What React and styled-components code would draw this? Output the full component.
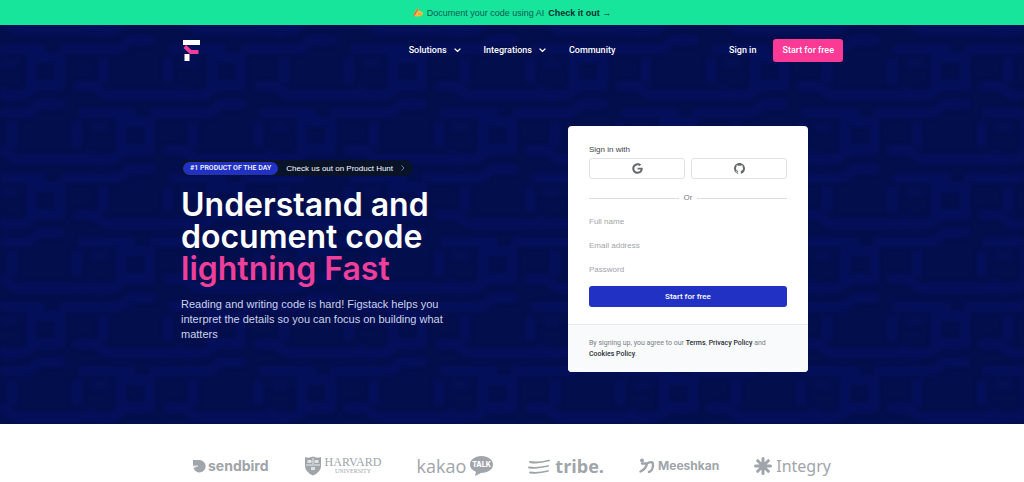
import React from "react";
import styled, { createGlobalStyle } from "styled-components";
import { FaGoogle } from "react-icons/fa";

// colors
const colors = {
  green: "#17e59c",
  navy: "#030e4c",
  line: "#05105e",
  pink: "#fb3a95",
  titlePink: "#ee3f9b",
  blue: "#2131c4",
  grey: "#a0a5ab",
};

const sans = `"Liberation Sans", Arial, sans-serif`;
const medium = `Roboto, "Liberation Sans", sans-serif`;
const display = `Inter, "Liberation Sans", sans-serif`;

const GlobalStyle = createGlobalStyle`
  * {
    box-sizing: border-box;
  }
  body {
    margin: 0;
    background: #fff;
    font-family: ${sans};
    overflow-x: hidden;
  }
  a {
    color: inherit;
    text-decoration: none;
  }
  button, input {
    font-family: inherit;
  }
`;

const Banner = styled.div`
  display: flex;
  align-items: center;
  justify-content: center;
  gap: 4px;
  height: 25px;
  background: ${colors.green};
  color: #0b5b52;
  font-size: 9px;

  a {
    color: #06302f;
    font-weight: 700;
  }
  svg {
    flex: none;
  }
`;

const Hero = styled.div`
  position: relative;
  background: ${colors.navy};
  color: #fff;
`;

// decorative pattern lies behind the hero content
const Backdrop = styled.svg`
  position: absolute;
  inset: 0;
  width: 100%;
  height: 100%;
`;

const Container = styled.div`
  position: relative;
  width: 100%;
  max-width: ${(props) => props.$width || 662}px;
  margin: 0 auto;
`;

const Header = styled.header`
  display: grid;
  grid-template-columns: 1fr auto 1fr;
  align-items: center;
  height: 50px;
  font-family: ${medium};
  font-size: 9px;
  font-weight: 500;
`;

const Logo = styled.a`
  display: flex;
  padding-left: 2px;
`;

const Nav = styled.nav`
  display: flex;
  align-items: center;
  gap: 23px;
`;

const NavLink = styled.a`
  display: flex;
  align-items: center;
  gap: 7px;
`;

const Actions = styled.div`
  display: flex;
  align-items: center;
  justify-content: flex-end;
  gap: 17px;
`;

const Button = styled.button`
  height: ${(props) => (props.$block ? 21 : 23)}px;
  width: ${(props) => (props.$block ? "100%" : "auto")};
  padding: 0 9px;
  border: 0;
  border-radius: 3px;
  background: ${(props) => (props.$block ? colors.blue : colors.pink)};
  color: #fff;
  font-family: ${medium};
  font-size: ${(props) => (props.$block ? 8 : 9)}px;
  font-weight: 500;
  white-space: nowrap;
`;

const Main = styled.main`
  display: grid;
  grid-template-columns: 1fr 310px;
  align-items: center;
  padding: 51px 0 52px;
`;

const Pill = styled.a`
  display: inline-flex;
  align-items: center;
  gap: 8px;
  height: 16px;
  padding: 0 8px 0 2px;
  border-radius: 8px;
  background: #081229;
  font-size: 8px;
`;

const Badge = styled.span`
  padding: 0 7px;
  border-radius: 7px;
  background: ${colors.blue};
  font-family: ${medium};
  font-size: 7px;
  font-weight: 500;
  line-height: 13px;
`;

const Title = styled.h1`
  margin: 13px 0 12px;
  font-family: ${display};
  font-size: 32px;
  font-weight: 600;
  line-height: 32px;

  span {
    display: block;
    color: ${colors.titlePink};
  }
`;

const Lead = styled.p`
  max-width: 290px;
  margin: 0;
  color: #cdd3ea;
  font-size: 11px;
  line-height: 15px;
`;

const Card = styled.section`
  width: 240px;
  justify-self: center;
  border-radius: 4px;
  background: #fff;
  color: #3f444b;
  font-size: 8px;
  overflow: hidden;
`;

const Form = styled.form`
  padding: 18px 21px 17px;
`;

const FormTitle = styled.div`
  margin-bottom: 2px;
  line-height: 12px;
`;

const Social = styled.div`
  display: grid;
  grid-template-columns: 1fr 1fr;
  gap: 6px;
`;

const SocialButton = styled.button`
  display: flex;
  align-items: center;
  justify-content: center;
  height: 21px;
  padding: 0;
  border: 1px solid #dfe2e5;
  border-radius: 3px;
  background: #fff;
  color: #666b70;
`;

const Divider = styled.div`
  display: flex;
  align-items: center;
  gap: 5px;
  margin: 13px 0 5px;
  color: #7b8086;
  line-height: 12px;

  &::before,
  &::after {
    content: "";
    flex: 1;
    height: 1px;
    background: #dcdfe2;
  }
`;

const Fields = styled.div`
  margin-bottom: 5px;
`;

const Field = styled.input`
  display: block;
  width: 100%;
  height: 24px;
  padding: 0;
  border: 0;
  background: transparent;
  color: #3f444b;
  font-size: 8px;

  &::placeholder {
    color: #a0a4a8;
    opacity: 1;
  }
`;

const Terms = styled.div`
  padding: 13px 21px 12px;
  border-top: 1px solid #e7eaed;
  background: #f8fafb;
  color: #7b8086;
  font-family: ${medium};
  font-size: 7px;
  line-height: 11px;

  a {
    color: #2a2e35;
    font-weight: 500;
  }
`;

const Brands = styled(Container)`
  display: flex;
  align-items: center;
  justify-content: space-between;
  height: 58px;
  margin-top: 13px;
`;

const Brand = styled.div`
  display: flex;
  align-items: center;
  gap: ${(props) => props.$gap || 3}px;
  color: ${colors.grey};
  font-family: ${(props) => props.$font || display};
  font-size: ${(props) => props.$size}px;
  font-weight: ${(props) => props.$weight || 400};
  line-height: 20px;
`;

const Stack = styled.div`
  display: flex;
  flex-direction: column;
  align-items: center;
  line-height: 11px;

  small {
    font-size: 6px;
    line-height: 7px;
  }
`;

const Chevron = () => (
  <svg width="7" height="5" viewBox="0 0 7 5" fill="none" stroke="currentColor">
    <path d="M1 1l2.5 2.5L6 1" strokeWidth="1.2" strokeLinecap="round" />
  </svg>
);

const WritingHand = () => (
  <svg width="10" height="9" viewBox="0 0 10 9">
    <path
      d="M1 5.800Q2.500 2 4.500 .6q1.400-.3 1.200 1L5 3.200l2.400-.5q1 .2.700 1l1.300.4q.8.700.2 1.500.5.900-.3 1.500Q7.500 8.800 4.500 8.600L1 8.300z"
      fill="#f7bd45"
    />
    <path d="M.3 8.800L1 6l3.200-5.200 1.100.7L2.200 7z" fill="#e4663f" />
    <path d="M5 5.200h3.600M5 6.600h3.400" stroke="#d98d24" strokeWidth=".5" />
  </svg>
);

const Pattern = () => (
  <Backdrop aria-hidden="true">
    <defs>
      <filter
        id="soft"
        x="0"
        y="0"
        width="100%"
        height="100%"
        colorInterpolationFilters="sRGB"
      >
        <feGaussianBlur stdDeviation="2" />
      </filter>
      <g id="links" fill="none" stroke={colors.line} strokeWidth="9">
        <path d="M-12 24H45M60 24H120L130 15H155M-12 70H24L36 61H60M74 61H94L106 70H172" />
        <path d="M31 33H60V60H31zM103 33V58M168 33V58" />
        <path d="M0 38H18M-4 63L12 76" opacity="0.6" />
      </g>
      <pattern id="grid" width="181" height="129" patternUnits="userSpaceOnUse">
        <use href="#links" />
        <use href="#links" x="181" />
        <use href="#links" x="90" y="64" />
        <use href="#links" x="-91" y="64" />
        <use href="#links" x="90" y="-65" />
        <use href="#links" x="-91" y="-65" />
      </pattern>
    </defs>
    <g filter="url(#soft)" opacity="0.85">
      <rect width="100%" height="100%" fill="url(#grid)" />
    </g>
  </Backdrop>
);

export default function App() {
  return (
    <React.Fragment>
      <GlobalStyle />
      <Banner>
        <WritingHand />
        <span>Document your code using AI</span>
        <a href="#docs">Check it out →</a>
      </Banner>

      <Hero>
        <Pattern />
        <Container>
          <Header>
            <Logo href="#home" aria-label="Figstack">
              <svg width="17" height="21" viewBox="0 0 17 21">
                <path d="M0 0h17v5H0zM1.500 14h5v7h-5z" fill="#fff" />
                <path d="M3 5l5.500 5H15.500v4H7L.5 8z" fill="#ee3d9d" />
              </svg>
            </Logo>
            <Nav>
              <NavLink href="#solutions">
                Solutions <Chevron />
              </NavLink>
              <NavLink href="#integrations">
                Integrations <Chevron />
              </NavLink>
              <NavLink href="#community">Community</NavLink>
            </Nav>
            <Actions>
              <a href="#signin">Sign in</a>
              <Button type="button">Start for free</Button>
            </Actions>
          </Header>

          <Main>
            <div>
              <Pill href="#producthunt">
                <Badge>#1 PRODUCT OF THE DAY</Badge>
                Check us out on Product Hunt
                <svg width="4" height="6" viewBox="0 0 4 6" fill="none">
                  <path d="M.5.5L3 3 .5 5.500" stroke="#8a90a0" strokeWidth=".9" />
                </svg>
              </Pill>
              <Title>
                Understand and
                <br />
                document code
                <span>lightning Fast</span>
              </Title>
              <Lead>
                Reading and writing code is hard! Figstack helps you interpret
                the details so you can focus on building what matters
              </Lead>
            </div>

            <Card>
              <Form onSubmit={(e) => e.preventDefault()}>
                <FormTitle>Sign in with</FormTitle>
                <Social>
                  <SocialButton type="button" aria-label="Sign in with Google">
                    <FaGoogle size={11} />
                  </SocialButton>
                  <SocialButton type="button" aria-label="Sign in with GitHub">
                    <svg width="11" height="11" viewBox="0 0 20 20">
                      <path
                        fill="currentColor"
                        fillRule="evenodd"
                        d="M10 0C4.477 0 0 4.484 0 10.017c0 4.425 2.865 8.180 6.839 9.504.5.092.682-.217.682-.483 0-.237-.008-.868-.013-1.703-2.782.605-3.369-1.343-3.369-1.343-.454-1.158-1.110-1.466-1.110-1.466-.908-.620.069-.608.069-.608 1.003.070 1.531 1.032 1.531 1.032.892 1.530 2.341 1.088 2.910.832.092-.647.350-1.088.636-1.338-2.220-.253-4.555-1.113-4.555-4.951 0-1.093.390-1.988 1.029-2.688-.103-.253-.446-1.272.098-2.650 0 0 .840-.270 2.750 1.026A9.564 9.564 0 0110 4.844c.850.004 1.705.115 2.504.337 1.909-1.296 2.747-1.027 2.747-1.027.546 1.379.203 2.398.100 2.651.640.700 1.028 1.595 1.028 2.688 0 3.848-2.339 4.695-4.566 4.942.359.310.678.921.678 1.856 0 1.338-.012 2.419-.012 2.747 0 .268.180.580.688.482A10.019 10.019 0 0020 10.017C20 4.484 15.522 0 10 0z"
                      />
                    </svg>
                  </SocialButton>
                </Social>
                <Divider>Or</Divider>
                <Fields>
                  <Field type="text" placeholder="Full name" aria-label="Full name" />
                  <Field type="email" placeholder="Email address" aria-label="Email address" />
                  <Field type="password" placeholder="Password" aria-label="Password" />
                </Fields>
                <Button type="submit" $block>
                  Start for free
                </Button>
              </Form>
              <Terms>
                By signing up, you agree to our <a href="#terms">Terms</a>,{" "}
                <a href="#privacy">Privacy Policy</a> and{" "}
                <a href="#cookies">Cookies Policy</a>.
              </Terms>
            </Card>
          </Main>
        </Container>
      </Hero>

      <Brands $width={638}>
        <Brand $size={14} $gap={2} $weight={700}>
          <svg width="13" height="14" viewBox="0 0 13 14" fill="currentColor">
            <path d="M0 1h6.500a6.200 6.200 0 1 1-6 8L5 7.500H0z" />
            <path d="M0 7h5" stroke="#fff" strokeWidth=".8" />
          </svg>
          sendbird
        </Brand>
        <Brand $size={12} $gap={3} $font={`"Liberation Serif", serif`}>
          <svg width="18" height="20" viewBox="0 0 18 20">
            <path d="M1 1q4 1.500 8-.5 4 2 8 .5V10q0 6-8 9.500Q1 16 1 10z" fill="currentColor" />
            <path d="M3.500 4h4v3h-4zM10.500 4h4v3h-4zM7 11h4v3H7z" fill="#dfe1e3" />
            <path d="M2 9h14M9 2v6" stroke="#fff" strokeWidth=".8" />
          </svg>
          <Stack>
            HARVARD
            <small>UNIVERSITY</small>
          </Stack>
        </Brand>
        <Brand $size={18} $gap={4} $font={`"Open Sans", sans-serif`}>
          kakao
          <svg width="23" height="20" viewBox="0 0 23 20">
            <path
              d="M11.500 0C18 0 23 3.600 23 8.500S18 17 11 17L5 20l1-4.200C2.500 14.500 0 12 0 8.500 0 3.600 5 0 11.500 0z"
              fill="currentColor"
            />
            <text
              x="11.5"
              y="11"
              textAnchor="middle"
              fill="#fff"
              fontFamily={display}
              fontSize="7"
              fontWeight="800"
            >
              TALK
            </text>
          </svg>
        </Brand>
        <Brand $size={18} $gap={5} $weight={700} $font={`"Open Sans", sans-serif`}>
          <svg width="22" height="15" viewBox="0 0 22 15" fill="none" stroke="currentColor">
            <path
              d="M2 3q8 1.500 19-1.500M1 8.500q9 1 19-1.500M2 13.500q9 1 18-1.500"
              strokeWidth="1.800"
              strokeLinecap="round"
            />
          </svg>
          tribe.
        </Brand>
        <Brand $size={12} $weight={700}>
          <svg width="16" height="16" viewBox="0 0 16 16" fill="currentColor">
            <circle cx="3" cy="2.500" r="2" />
            <path
              d="M3 5.500h5Q7 11 1.500 13.500M8 5.500Q14.500 2 14 7.500T10 14"
              fill="none"
              stroke="currentColor"
              strokeWidth="2.400"
              strokeLinecap="round"
              strokeLinejoin="round"
            />
          </svg>
          Meeshkan
        </Brand>
        <Brand $size={16} $gap={4} $font={`"Noto Sans", sans-serif`}>
          <svg width="18" height="18" viewBox="0 0 18 18" stroke="currentColor">
            <path
              d="M9 1.500v15M1.500 9h15M3.700 3.700l10.600 10.600M3.700 14.300L14.300 3.700"
              strokeWidth="3"
              strokeLinecap="round"
            />
          </svg>
          Integry
        </Brand>
      </Brands>
    </React.Fragment>
  );
}
